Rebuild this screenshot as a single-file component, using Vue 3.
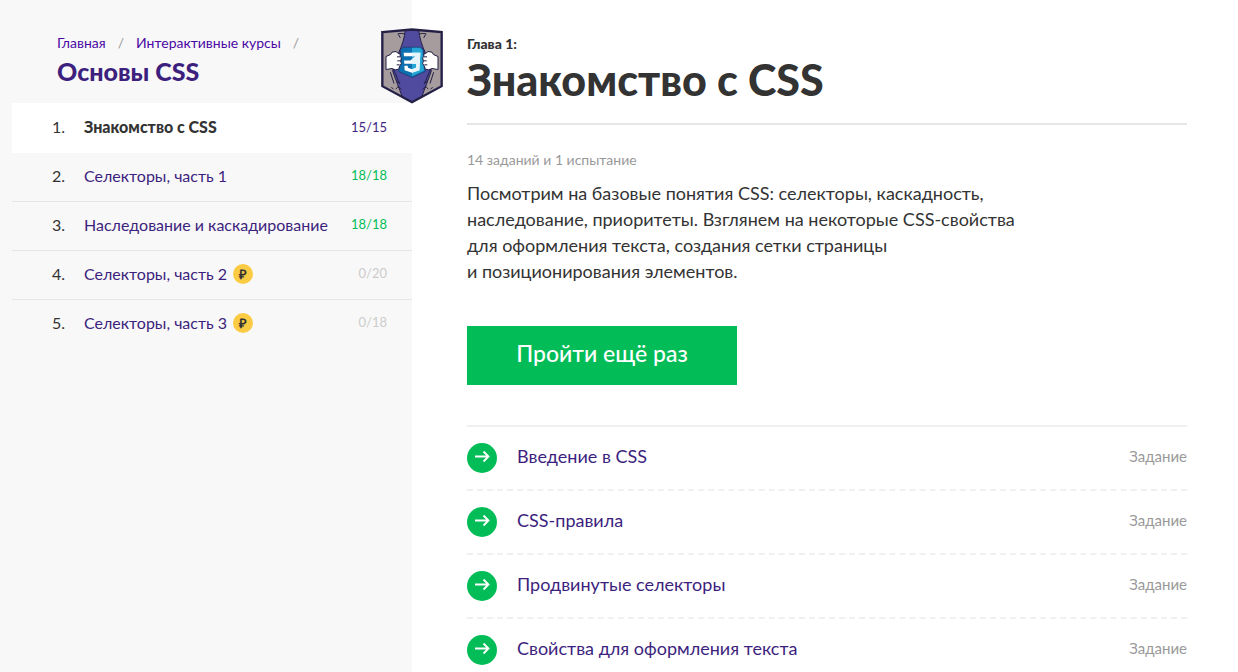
<script setup>
const chapters = [
  { title: 'Знакомство с CSS', score: '15/15', state: 'current' },
  { title: 'Селекторы, часть 1', score: '18/18', state: 'done' },
  { title: 'Наследование и каскадирование', score: '18/18', state: 'done' },
  { title: 'Селекторы, часть 2', score: '0/20', state: 'locked', paid: true },
  { title: 'Селекторы, часть 3', score: '0/18', state: 'locked', paid: true },
]

const tasks = [
  'Введение в CSS',
  'CSS-правила',
  'Продвинутые селекторы',
  'Свойства для оформления текста',
]
</script>

<template>
  <div class="page">
    <aside class="sidebar">
      <header class="course">
        <nav class="crumbs" aria-label="Навигация">
          <a href="#">Главная</a><span>/</span><a href="#">Интерактивные курсы</a><span>/</span>
        </nav>
        <h2><a href="#">Основы CSS</a></h2>
      </header>
      <svg class="emblem" viewBox="33 25 186 225" aria-hidden="true">
        <path d="M37 36 126 28 215 36V198L126 246 37 198Z" fill="#a69c9e" />
        <path d="M106 29C104 52 96 76 86 98L68 152C76 176 88 206 97 231L126 246 155 231C164 206 176 176 184 152L166 98C156 76 148 52 146 29L126 28Z" fill="#504b9f" stroke="#231f45" stroke-width="3" />
        <path d="M83 41Q96 38 105 42M85 43 91 53M169 41Q156 38 147 42M167 43 161 53M70 148C80 164 82 180 90 192M61 156 72 190M88 188 78 183M94 208C88 197 82 198 78 207M64 202 70 206M182 148C172 164 170 180 162 192M191 156 180 190M164 188 174 183M158 208C164 197 170 198 174 207M188 202 182 206" fill="none" stroke="#231f45" stroke-width="3" />
        <path d="M92 89 100 81H152L160 89 166 154 126 172 86 154Z" fill="#0c70b0" stroke="#263f78" stroke-width="3" />
        <path d="M126 83H151L157 91 162 151 126 168Z" fill="#26a6d5" />
        <path d="M101 98H151L148 150 126 158 104 150 103 137H113L114 143 126 147 138 143 139 131H103L102 121H121L137 108H102Z" fill="#fff" />
        <path d="M126 98H151L148 150 126 158V147L138 143 139 131H126V117L137 108H126Z" fill="#e5f5fb" />
        <path d="M48 109 62 103 66 96 78 94 84 99 90 101 91 109 94 113 92 123 94 130 89 138 86 147 76 149 66 145 48 148Z" fill="#fff" stroke="#231f45" stroke-width="3" stroke-linejoin="round" />
        <path d="M204 109 190 103 186 96 174 94 168 99 162 101 161 109 158 113 160 123 158 130 163 138 166 147 176 149 186 145 204 148Z" fill="#fff" stroke="#231f45" stroke-width="3" stroke-linejoin="round" />
        <path d="M81 110H91M82 122H92M80 134H89M171 110H161M170 122H160M172 134H163" stroke="#231f45" stroke-width="3" />
        <path d="M37 36 126 28 215 36V198L126 246 37 198Z" fill="none" stroke="#231f45" stroke-width="7" />
      </svg>
      <ol class="chapters">
        <li v-for="(chapter, i) in chapters" :key="chapter.title" :class="chapter.state">
          <span class="number">{{ i + 1 }}.</span>
          <a href="#">{{ chapter.title }}</a>
          <span v-if="chapter.paid" class="coin">₽</span>
          <span class="score">{{ chapter.score }}</span>
        </li>
      </ol>
    </aside>

    <main class="content">
      <header class="heading">
        <p>Глава 1:</p>
        <h1>Знакомство с CSS</h1>
      </header>
      <p class="summary">14 заданий и 1 испытание</p>
      <p class="description">
        Посмотрим на базовые понятия CSS: селекторы, каскадность,<br />
        наследование, приоритеты. Взглянем на некоторые CSS-свойства<br />
        для оформления текста, создания сетки страницы<br />
        и позиционирования элементов.
      </p>
      <button type="button" class="start">Пройти ещё раз</button>
      <ul class="tasks">
        <li v-for="task in tasks" :key="task">
          <svg class="arrow" viewBox="0 0 30 30" aria-hidden="true">
            <circle cx="15" cy="15" r="15" fill="#02bd57" />
            <path d="M8 13.5H21M16.5 8.5 21.5 13.5 16.5 18.5" fill="none" stroke="#fff" stroke-width="1.8" />
          </svg>
          <a href="#">{{ task }}</a>
          <span class="kind">Задание</span>
        </li>
      </ul>
    </main>
  </div>
</template>

<style>
body {
  margin: 0;
  background: #fff;
}
</style>

<style scoped>
.page {
  display: flex;
  min-height: 100vh;
  font-family: Lato, "Open Sans", sans-serif;
  font-size: 16px;
  color: #333;
}

h1, h2, p, ol, ul {
  margin: 0;
  padding: 0;
}

ol, ul {
  list-style: none;
}

a {
  color: #3d1f7e;
  text-decoration: none;
}

.sidebar {
  position: relative;
  flex: 0 0 400px;
  padding-left: 12px;
  background: #f8f8f8;
}

.course {
  padding: 33px 45px 14px;
}

.crumbs {
  display: flex;
  gap: 12px;
  font-size: 14px;
  line-height: 20px;
  white-space: nowrap;
  color: #999;
}

.crumbs a {
  color: #4b08a5;
}

h2 {
  font-size: 25px;
  font-weight: 900;
  line-height: 36px;
}

.emblem {
  position: absolute;
  top: 28px;
  right: -31px;
  width: 62px;
  height: 76px;
}

.chapters li {
  box-sizing: border-box;
  display: flex;
  align-items: center;
  height: 49px;
  padding: 0 25px 4px 40px;
  border-bottom: 1px solid #e5e5e5;
  white-space: nowrap;
}

.chapters li.current {
  height: 50px;
  padding-bottom: 2px;
  background: #fff;
  border-color: #fff;
}

.chapters li:last-child {
  border-color: transparent;
}

.number {
  width: 32px;
}

.current a {
  font-weight: 900;
  color: #333;
}

.coin {
  width: 20px;
  margin: 2px 0 0 6px;
  border-radius: 50%;
  background: #fbcc43;
  font-size: 13px;
  font-weight: 700;
  line-height: 20px;
  text-align: center;
}

.score {
  margin-left: auto;
  font-size: 13px;
  color: #3d1f7e;
}

.done .score {
  color: #02bd57;
}

.locked .score {
  color: #ccc;
}

.content {
  flex: 1;
  padding: 34px 51px 0 55px;
}

.heading {
  padding-bottom: 18px;
  border-bottom: 2px solid #e5e5e5;
}

.heading p {
  font-size: 14px;
  font-weight: 900;
  line-height: 20px;
}

h1 {
  font-size: 43px;
  font-weight: 900;
  line-height: 51px;
}

.summary {
  margin-top: 25px;
  font-size: 14px;
  line-height: 20px;
  color: #999;
}

.description {
  margin-top: 10px;
  font-size: 18px;
  line-height: 26px;
}

.start {
  display: block;
  width: 270px;
  height: 59px;
  margin-top: 42px;
  padding: 0 0 6px;
  border: 0;
  background: #02bd57;
  font-family: inherit;
  font-size: 23px;
  font-weight: 500;
  color: #fff;
}

.tasks {
  margin-top: 40px;
  border-top: 2px solid #f0f0f0;
}

.tasks li {
  display: flex;
  align-items: center;
  height: 62px;
  border-bottom: 2px dashed #f0f0f0;
  font-size: 18px;
}

.tasks a,
.kind {
  padding-bottom: 4px;
}

.arrow {
  width: 30px;
  height: 30px;
  margin-right: 20px;
}

.kind {
  margin-left: auto;
  font-size: 15px;
  color: #999;
}
</style>
